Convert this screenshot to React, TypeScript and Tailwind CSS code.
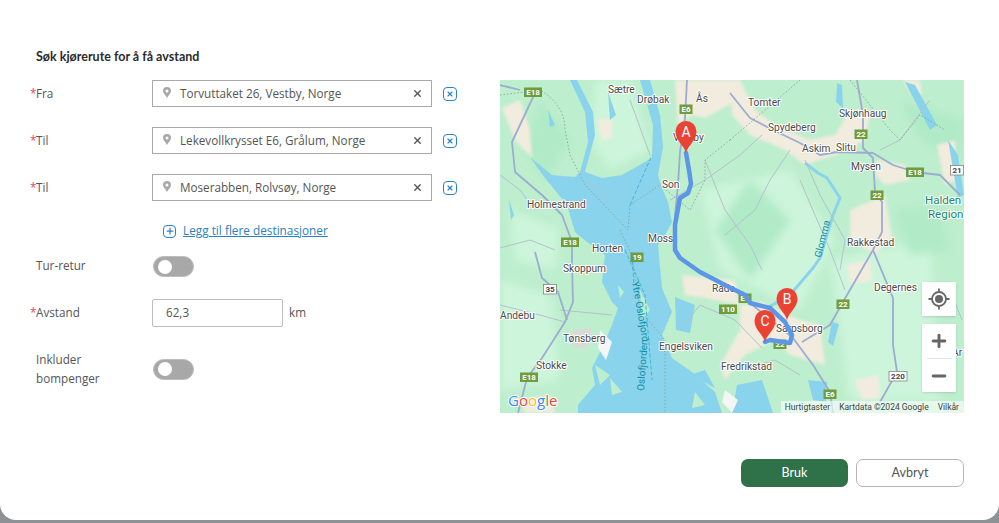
import { Plus, Minus, X } from "lucide-react"

// label positions are map coordinates, the map is 464x333
const places = [
  ["Sætre", 108, 13], ["Drøbak", 137, 23], ["Ås", 196, 22], ["Vestby", 173, 61], ["Son", 162, 108],
  ["Holmestrand", 27, 128], ["Moss", 148, 162], ["Horten", 92, 172], ["Skoppum", 63, 192], ["Andebu", 0, 239],
  ["Tønsberg", 63, 262], ["Stokke", 36, 289], ["Engelsviken", 159, 270], ["Råde", 212, 212], ["Fredrikstad", 221, 290],
  ["Sarpsborg", 276, 252], ["Degernes", 374, 211], ["Ar", 452, 276], ["Tomter", 248, 26], ["Spydeberg", 268, 51],
  ["Skjønhaug", 339, 37], ["Askim", 302, 72], ["Slitu", 336, 71], ["Mysen", 351, 90], ["Rakkestad", 347, 166],
] as const

const shields = [
  ["E18", 33, 12, 0], ["E6", 186, 29, 0], ["E18", 70, 162, 0], ["19", 137, 177, 0], ["35", 50, 209, 1],
  ["E18", 29, 297, 0], ["110", 228, 229, 0], ["E6", 245, 218, 0], ["22", 280, 264, 0], ["22", 343, 224, 0],
  ["220", 398, 296, 1], ["E6", 330, 314, 0], ["22", 361, 54, 0], ["22", 377, 115, 0], ["E18", 415, 92, 0], ["21", 457, 90, 1],
] as const

const roads = [
  "M35 13 L12 62 L15 92 L42 115 L62 135 L72 162 L72 185 L73 222 L65 242 L42 278 L27 298 L18 333",
  "M187 0 L185 38 L180 72 L178 105 L175 135 L175 170",
  "M250 223 L293 258 L313 285 L330 312 L333 333",
  "M0 5 L20 10 M230 13 L250 38 L273 50 L300 63 L320 75 L337 72 L373 73 L393 85 L415 92 L440 95 L460 115",
  "M357 0 L363 35 L363 68 L373 78 L375 112 L382 122 L382 152 L373 170 L343 222 L330 245 L302 262",
  "M35 172 L42 198 L58 212 L67 240",
  "M373 170 L393 218 L393 265 L397 292 L380 322",
]

const thinRoads = [
  "M0 95 L20 110 L35 130 M0 225 L40 235 L65 242 M60 230 L112 235 M130 20 L150 75",
  "M85 100 L110 120 M205 80 L225 130 L250 165 L262 190 M300 100 L330 170 L345 210",
  "M305 80 L320 115 L345 160 L340 190 M430 20 L400 60 L380 70 M0 168 L30 160 L55 170",
  "M180 250 L200 225 L235 240 L262 268 M240 290 L275 280 L300 295 M170 120 L205 100 L240 75 L262 55",
  "M450 210 L462 240 M290 70 L270 100 L255 130 L225 155",
]

const lightLand = "M95 0 L130 0 L150 70 L110 90 L90 60Z M200 110 L290 90 L335 160 L300 230 L220 190Z M330 180 L430 160 L440 320 L350 320Z M0 200 L50 215 L60 300 L0 310Z M10 130 L60 150 L55 190 L15 180Z"
const deepLand = "M250 100 L290 140 L250 200 L215 150Z M400 20 L464 40 L460 80 L420 60Z M40 20 L70 60 L45 100 L25 70Z M395 130 L440 125 L450 170 L410 175Z M115 240 L125 260 L115 270Z"

const towns = [
  "M2 28 L20 20 L30 50 L32 78 L15 60Z",
  "M97 40 L112 38 L112 58 L102 60Z",
  "M175 0 L235 0 L238 20 L205 38 L192 35 L178 45Z",
  "M230 0 L240 0 L255 30 L275 45 L310 60 L335 55 L350 30 L370 35 L365 60 L335 75 L305 85 L285 70 L250 55 L232 35Z",
  "M377 80 L405 85 L410 100 L385 105 L375 95Z",
  "M437 65 L455 60 L458 100 L445 105Z",
  "M403 0 L420 0 L422 15 L410 12Z",
  "M350 130 L385 115 L392 158 L375 175 L350 160Z",
  "M347 185 L370 180 L372 200 L350 205Z",
  "M355 300 L378 295 L380 318 L362 320Z",
  "M182 195 L235 200 L240 225 L205 218 L185 215Z",
  "M240 225 L262 222 L300 240 L320 245 L325 285 L290 275 L275 260 L245 275 L225 300 L220 285 L240 250Z",
  "M20 320 L50 315 L55 333 L25 333Z",
].join(" ")

const water = "M140 0 L150 0 L160 35 L163 67 L158 95 L162 108 L168 122 L172 142 L165 155 L158 165 L162 208 L172 232 L162 255 L172 278 L192 292 L215 312 L222 333 L78 333 L78 325 L95 305 L92 288 L102 268 L112 245 L118 228 L112 222 L102 202 L105 175 L87 162 L75 152 L67 125 L45 98 L30 77 L52 95 L75 97 L80 92 L88 62 L85 32 L70 0 L77 0 L93 32 L95 55 L85 92 L102 98 L122 95 L152 78 L153 45Z"

const lakes = "M337 3 L342 5 L343 28 L336 22Z M308 300 L327 302 L326 322 L313 320Z M237 305 L262 300 L273 333 L232 333Z M332 242 L339 244 L333 266 L328 262Z M175 217 L195 225 L190 253 L176 250Z M190 295 L205 290 L215 308Z M405 2 L415 5 L437 45 L430 50Z M448 60 L458 75 L464 115 L458 118Z M9 120 L14 135 L11 140Z M48 30 L55 45 L50 47Z M108 12 L116 35 L110 40Z"

const skerries = "M140 210 L150 230 L142 240Z M95 285 L110 295 L100 305Z M110 298 L122 312 L112 315Z M118 205 L124 212 L120 218Z M195 312 L205 325 L192 328Z"

function Pin({ x, y, letter }: { x: number; y: number; letter: string }) {
  return (
    <g transform={`translate(${x} ${y})`}>
      <path d="M0 0C-2 -8 -10.500 -12 -10.500 -21.500A10.500 10.500 0 0 1 10.500 -21.500C10.500 -12 2 -8 0 0Z" fill="#ea4335" />
      <text x="0" y="-16.500" textAnchor="middle" fontSize="14" fill="#fff" fontFamily="Roboto, sans-serif">{letter}</text>
    </g>
  )
}

function RouteMap() {
  return (
    <svg viewBox="0 0 464 333" className="block w-[464px] h-[333px]">
      <defs>
        <filter id="soft"><feGaussianBlur stdDeviation="4" /></filter>
        <filter id="soft-town"><feGaussianBlur stdDeviation="1.500" /></filter>
      </defs>
      <rect width="464" height="333" fill="#bdeecd" />
      <path d={lightLand} fill="#cdf5db" filter="url(#soft)" />
      <path d={deepLand} fill="#b0eac6" filter="url(#soft)" />
      <path d={towns} fill="#f1ecde" filter="url(#soft-town)" />
      <path d="M72 250 L92 248 L88 268 L74 268Z" fill="#d9dbd8" />
      {/* sea */}
      <path d={water} fill="#89d4ec" />
      <path d={lakes} fill="#89d4ec" />
      <path d={skerries} fill="#bdeecd" />
      <path d="M225 310 L238 320 L232 333 L222 322Z M100 250 L112 262 L106 280 L98 268Z" fill="#f3f6f4" />
      {/* glomma */}
      <path d="M267 228 L290 215 L313 188 L320 178 L333 135 L340 118 L327 98 L318 93 L305 83" fill="none" stroke="#89d4ec" strokeWidth="3" strokeLinejoin="round" />
      {/* roads */}
      {thinRoads.map((d, i) => (
        <path key={i} d={d} fill="none" stroke="#b4c2cc" strokeWidth="1" />
      ))}
      {roads.map((d, i) => (
        <path key={i} d={d} fill="none" stroke="#9dacd0" strokeWidth="1.800" strokeLinejoin="round" />
      ))}
      {/* borders and ferry lines */}
      <path d="M0 15 L40 10 Q65 25 65 50 L70 75 L85 105 L128 150 L130 125 L160 105 L190 130 L205 100 L205 80 L230 60 M120 150 L132 175 L140 230 L165 260 L165 333 M230 60 L300 0 M350 0 L390 50 L400 60 L420 35 L445 50" fill="none" stroke="#8f9f98" strokeWidth="0.900" strokeDasharray="1.500 2" />
      <path d="M130 125 L152 75 M125 170 L145 215 L152 300 M132 175 L134 205" fill="none" stroke="#42b6d3" strokeWidth="1" strokeDasharray="4 2" />
      {/* labels */}
      {places.map(([name, x, y]) => (
        <text key={name} x={x} y={y} fontSize="10.200" fontFamily="Roboto, sans-serif" fill="#4a4a4a" stroke="#fff" strokeWidth="2" paintOrder="stroke" strokeLinejoin="round">{name}</text>
      ))}
      <g fontSize="11.500" fontFamily="Roboto, sans-serif" fill="#16876b" stroke="#fff" strokeWidth="2" paintOrder="stroke">
        <text x="425" y="124">Halden</text>
        <text x="428" y="138">Region</text>
      </g>
      <g fontSize="10" fontFamily="Roboto, sans-serif" fill="#0f8fa8">
        <text transform="translate(321 178) rotate(-76)">Glomma</text>
        <text transform="translate(132 202) rotate(80)">Ytre Oslofjord</text>
        <text transform="translate(144 311) rotate(-86)">Oslofjorden</text>
      </g>
      {/* road shields */}
      {shields.map(([label, x, y, plain], i) => {
        const w = label.length > 2 ? 18 : 13
        return (
          <g key={i}>
            <rect x={x - w / 2} y={y - 4.500} width={w} height="9.500" fill={plain ? "#fff" : "#6f9c3e"} stroke={plain ? "#777" : "none"} strokeWidth="0.700" />
            <text x={x} y={y + 3} textAnchor="middle" fontSize="8" fontWeight="700" fontFamily="Roboto, sans-serif" fill={plain ? "#444" : "#fff"}>{label}</text>
          </g>
        )
      })}
      {/* route */}
      <path d="M186 73 L189 90 L191 104 L188 113 L180 118 L175 145 L175 170 L180 178 L200 192 L225 205 L245 215 L250 223 L270 228 L285 242 L292 255 L290 263 L270 260 L265 262" fill="none" stroke="#5b97e6" strokeWidth="4.500" strokeLinejoin="round" strokeLinecap="round" />
      <Pin x={186} y={73} letter="A" />
      <Pin x={287} y={240} letter="B" />
      <Pin x={265} y={262} letter="C" />
      {/* google logo */}
      <text x="8" y="326" fontSize="15" fontFamily="'Open Sans', sans-serif" stroke="#fff" strokeWidth="2" paintOrder="stroke" strokeLinejoin="round">
        <tspan fill="#4285f4">G</tspan><tspan fill="#ea4335">o</tspan><tspan fill="#fbbc05">o</tspan><tspan fill="#4285f4">g</tspan><tspan fill="#34a853">l</tspan><tspan fill="#ea4335">e</tspan>
      </text>
    </svg>
  )
}

function MapControls() {
  return (
    <div className="absolute right-[8px] top-[202px] flex flex-col gap-[8px]">
      <button className="w-[34px] h-[34px] bg-white flex items-center justify-center shadow-sm">
        <svg width="24" height="24" viewBox="0 0 24 24" fill="none" stroke="#666">
          <circle cx="12" cy="12" r="7" strokeWidth="1.800" />
          <circle cx="12" cy="12" r="4" fill="#666" stroke="none" />
          <path d="M12 1.500V5M12 19V22.500M1.500 12H5M19 12H22.500" strokeWidth="1.800" />
        </svg>
      </button>
      <div className="w-[34px] h-[68px] bg-white flex flex-col items-center shadow-sm">
        <div className="h-[34px] flex items-center justify-center">
          <Plus size={20} strokeWidth={3.500} color="#666" />
        </div>
        <div className="w-[25px] h-px bg-[#e6e6e6]" />
        <div className="flex-1 flex items-center justify-center">
          <Minus size={20} strokeWidth={3.500} color="#666" />
        </div>
      </div>
    </div>
  )
}

function Label({ children, required }: { children: React.ReactNode; required?: boolean }) {
  return (
    <label className="w-[116px] shrink-0 text-[11.700px] leading-[19px] text-[#555]">
      {required && <span className="inline-block w-[6px] -ml-[6px] text-[#e8475f]">*</span>}
      {children}
    </label>
  )
}

function PlacePin() {
  return (
    <svg width="8" height="11" viewBox="0 0 8 11" className="shrink-0 -mt-[3px]">
      <path fillRule="evenodd" d="M4 0A4 4 0 0 1 8 4C8 6.500 5 8.500 4 11C3 8.500 0 6.500 0 4A4 4 0 0 1 4 0ZM4 2.500A1.500 1.500 0 1 0 4 5.500A1.500 1.500 0 1 0 4 2.500Z" fill="#a8a8a8" />
    </svg>
  )
}

function AddressRow({ label, value, required }: { label: string; value: string; required?: boolean }) {
  return (
    <div className="flex items-center h-[27px]">
      <div className="flex w-[116px] shrink-0">
        <Label required={required}>{label}</Label>
      </div>
      <div className="w-[280px] h-[27px] flex items-center border border-[#a9a9a9] bg-white pl-[10px] pr-[8px]">
        <PlacePin />
        <span className="ml-[9px] flex-1 text-[11.700px] text-[#555]">{value}</span>
        <X size={11} strokeWidth={3} color="#555" />
      </div>
      <div className="ml-[11px] w-[14px] h-[14px] rounded-[4px] border-[1.500px] border-[#2a83c9] flex items-center justify-center">
        <X size={8} strokeWidth={3.500} color="#2a83c9" />
      </div>
    </div>
  )
}

function Toggle() {
  return (
    <div className="w-[41px] h-[21px] rounded-full bg-[#a8a8a8] border border-[#bdbdbd] flex items-center pl-[4px]">
      <div className="w-[14px] h-[14px] rounded-full bg-white" />
    </div>
  )
}

export default function App() {
  return (
    <div className="h-[523px] bg-[#8f9294] font-['Open_Sans',sans-serif]">
      <div className="h-[520px] bg-white rounded-b-[16px] pt-[49px]">
        <h2 className="pl-[36px] h-[16px] text-[12.500px] leading-[16px] font-bold text-[#2b2b2b] font-['Lato',sans-serif]">Søk kjørerute for å få avstand</h2>
        <div className="flex mt-[15px]">
          <div className="w-[500px] shrink-0 pl-[36px]">
            <div className="flex flex-col gap-[20px]">
              <AddressRow label="Fra" value="Torvuttaket 26, Vestby, Norge" required />
              <AddressRow label="Til" value="Lekevollkrysset E6, Grålum, Norge" required />
              <AddressRow label="Til" value="Moserabben, Rolvsøy, Norge" required />
            </div>
            <div className="flex items-center ml-[127px] mt-[20px] h-[20px]">
              <div className="w-[13px] h-[13px] rounded-[4px] border-[1.500px] border-[#2a83c9] flex items-center justify-center">
                <Plus size={10} strokeWidth={3} color="#2a83c9" />
              </div>
              <a className="ml-[7px] text-[11.800px] text-[#2a7fbd] underline">Legg til flere destinasjoner</a>
            </div>
            <div className="flex items-center mt-[15px] h-[21px]">
              <div className="flex w-[117px] shrink-0 -mt-[2px]"><Label>Tur-retur</Label></div>
              <Toggle />
            </div>
            <div className="flex items-center mt-[22px] h-[28px]">
              <div className="flex w-[116px] shrink-0 -mt-[2px]"><Label required>Avstand</Label></div>
              <div className="w-[131px] h-[28px] flex items-center border border-[#bdbdbd] rounded-[2px] pl-[13px] text-[11.700px] text-[#555]">62,3</div>
              <span className="ml-[6px] text-[11.700px] text-[#555]">km</span>
            </div>
            <div className="flex items-center mt-[23px]">
              <div className="w-[117px] shrink-0 text-[11.700px] leading-[19px] text-[#555]">Inkluder<br />bompenger</div>
              <Toggle />
            </div>
          </div>
          <div className="relative w-[464px] h-[333px] overflow-hidden">
            <RouteMap />
            <MapControls />
            <div className="absolute right-0 bottom-0 h-[12px] flex items-center gap-[9px] bg-white/60 pl-[4px] pr-[5px] text-[8.500px] text-[#444] font-['Roboto',sans-serif]">
              <span>Hurtigtaster</span>
              <span>Kartdata ©2024 Google</span>
              <span>Vilkår</span>
            </div>
          </div>
        </div>
        <div className="flex justify-end gap-[8px] pr-[35px] mt-[46px]">
          <button className="w-[107px] h-[28px] rounded-[7px] bg-[#2f7148] text-white text-[12.500px] font-['Lato',sans-serif]">Bruk</button>
          <button className="w-[108px] h-[28px] rounded-[7px] bg-white border border-[#b5b5b5] text-[#555] text-[12.500px] font-['Lato',sans-serif]">Avbryt</button>
        </div>
      </div>
    </div>
  )
}
